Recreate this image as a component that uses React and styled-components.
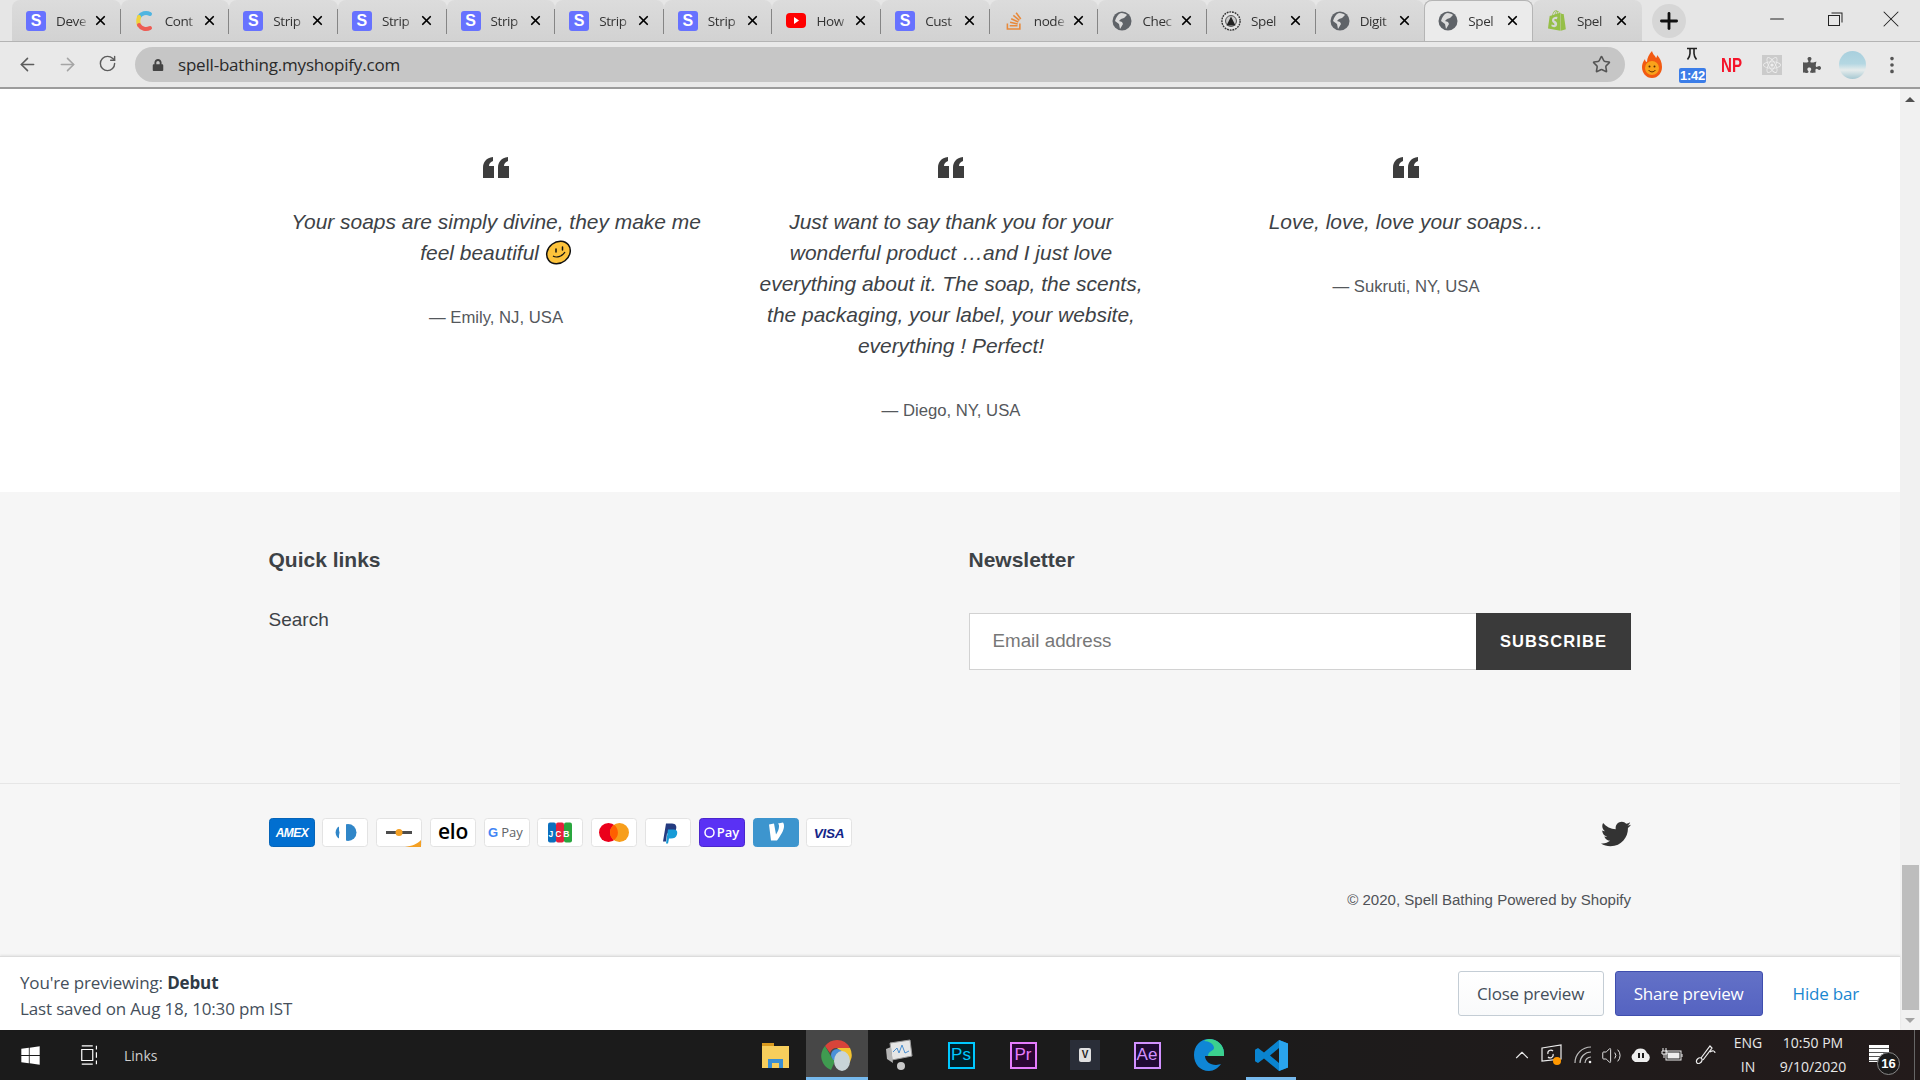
import React from "react";
import styled, { createGlobalStyle } from "styled-components";
import { ArrowLeft, ArrowRight, RotateCw, Star, X, Plus, Minus, ChevronUp, Volume2, EllipsisVertical } from "lucide-react";
import { FaLock, FaPuzzlePiece, FaReact, FaShopify, FaStackOverflow, FaTwitter, FaWindows } from "react-icons/fa";

const GlobalStyle = createGlobalStyle`
  html, body {
    margin: 0;
    padding: 0;
    width: 1920px;
    height: 1080px;
    overflow: hidden;
    background: #fff;
    font-family: "Liberation Sans", Arial, sans-serif;
  }
  * { box-sizing: border-box; }
`;

const Screen = styled.div`
  width: 1920px;
  height: 1080px;
  display: flex;
  flex-direction: column;
  overflow: hidden;
`;

/* ---- chrome ---- */

const TabStrip = styled.div`
  height: 41px;
  flex: none;
  display: flex;
  align-items: flex-end;
  padding-left: 12px;
  background: #e6e6e6;
`;

const Tab = styled.div`
  width: 108.65px;
  height: 41px;
  flex: none;
  display: flex;
  align-items: center;
  padding-left: 14px;
  background: ${p => (p.$active ? "#ebebeb" : "linear-gradient(#dcdcdc, #d2d2d2)")};
  border-radius: 8px 8px 0 0;
  box-shadow: ${p => (p.$active ? "inset 0 1px 0 #b5b5b5, inset 1px 0 0 #b5b5b5, inset -1px 0 0 #b5b5b5" : "none")};
  position: relative;
  ${p =>
    p.$sep &&
    `&::after {
      content: "";
      position: absolute;
      right: 0;
      top: 9px;
      width: 1px;
      height: 25px;
      background: #858585;
    }`}
`;

const TabIconSlot = styled.span`
  width: 20px;
  height: 20px;
  flex: none;
  display: flex;
  align-items: center;
  justify-content: center;
`;

const StripeIcon = styled.span`
  width: 20px;
  height: 20px;
  border-radius: 3px;
  background: #6772ff;
  color: #fff;
  font: 700 16px "Liberation Sans", sans-serif;
  display: flex;
  align-items: center;
  justify-content: center;
`;

const TabTitle = styled.span`
  width: 33px;
  margin-left: 10px;
  overflow: hidden;
  white-space: nowrap;
  font: 400 13.5px "Open Sans", sans-serif;
  color: #333;
  letter-spacing: -0.4px;
  -webkit-mask-image: linear-gradient(to right, #000 70%, transparent 100%);
  mask-image: linear-gradient(to right, #000 70%, transparent 100%);
`;

const TabClose = styled.span`
  margin-left: 4px;
  display: flex;
  color: #000;
`;

const NewTab = styled.button`
  width: 34px;
  height: 34px;
  margin: 0 0 3px 10px;
  padding: 0;
  border: 0;
  border-radius: 50%;
  background: #d6d6d6;
  color: #111;
  display: flex;
  align-items: center;
  justify-content: center;
`;

const WindowControls = styled.div`
  margin-left: auto;
  padding-right: 1px;
  height: 41px;
  display: flex;
  align-items: flex-start;
`;

const WindowButton = styled.span`
  width: 57px;
  height: 37px;
  display: flex;
  align-items: center;
  justify-content: center;
  color: #222;
`;

const RestoreIcon = styled.span`
  width: 12px;
  height: 11px;
  margin-top: 3px;
  border: 1.5px solid #222;
  box-shadow: 2px -2px 0 -0.5px #e6e6e6, 3px -3px 0 -0.5px #222;
`;

const Toolbar = styled.div`
  height: 48px;
  flex: none;
  display: flex;
  align-items: center;
  background: #e9e9e9;
  border-top: 1px solid #b4b4b4;
  border-bottom: 2px solid #9c9c9c;
`;

const NavButton = styled.span`
  width: 40px;
  display: flex;
  justify-content: center;
  color: ${p => (p.$dim ? "#a5a5a5" : "#5c5c5c")};
`;

const NavGroup = styled.div`
  width: 135px;
  padding-left: 7px;
  display: flex;
`;

const AddressBar = styled.div`
  width: 1490px;
  height: 35px;
  border-radius: 18px;
  background: #c6c6c6;
  display: flex;
  align-items: center;
  padding: 0 14px 0 17px;
  color: #444;
`;

const Url = styled.span`
  margin-left: 14px;
  font: 400 17px "Open Sans", sans-serif;
  letter-spacing: -0.2px;
  color: #2a2a2a;
`;

const AddressStar = styled.span`
  margin-left: auto;
  display: flex;
  color: #555;
`;

const Extensions = styled.div`
  flex: 1;
  padding-left: 7px;
  display: flex;
  align-items: center;
`;

const Extension = styled.span`
  width: 40px;
  height: 40px;
  flex: none;
  display: flex;
  align-items: center;
  justify-content: center;
  position: relative;
`;

const NpMark = styled.span`
  font: 700 21px "Liberation Sans", sans-serif;
  color: #f5142a;
  transform: scaleX(0.72);
`;

const FlaskHolder = styled.span`
  display: flex;
  margin-top: -22px;
`;

const TimerBadge = styled.span`
  position: absolute;
  left: 7px;
  bottom: 2px;
  width: 27px;
  height: 15px;
  border-radius: 2px;
  background: #3b7de8;
  color: #fff;
  font: 700 13px "Liberation Sans", sans-serif;
  line-height: 15px;
  text-align: center;
  letter-spacing: -0.2px;
`;

const ReactBox = styled.span`
  width: 20px;
  height: 20px;
  background: #cbcbcb;
  display: flex;
  align-items: center;
  justify-content: center;
`;

const Avatar = styled.span`
  width: 27px;
  height: 28px;
  border-radius: 50%;
  background: linear-gradient(#a8cfdd, #b4d7e2 45%, #e6ecec 68%, #a6c8d2);
`;

/* ---- page ---- */

const Body = styled.div`
  flex: 1;
  min-height: 0;
  display: flex;
`;

const Page = styled.div`
  width: 1900px;
  display: flex;
  flex-direction: column;
`;

const Testimonials = styled.section`
  flex: none;
  height: 403px;
  padding: 68px 0 0 268.5px;
  display: grid;
  grid-template-columns: repeat(3, 455px);
  background: #fff;
`;

const Testimonial = styled.figure`
  margin: 0;
  display: flex;
  flex-direction: column;
  align-items: center;
  text-align: center;
  color: #3d4246;
`;

const QuoteMark = styled.svg`
  width: 26px;
  height: 21px;
  margin-bottom: 28px;
  color: #3d3d3d;
`;

const QuoteText = styled.blockquote`
  margin: 0;
  width: ${p => p.$width}px;
  font: italic 400 20.95px/31px "Liberation Sans", sans-serif;
  color: #3d4246;
`;

const Smile = styled.svg`
  width: 27px;
  height: 25px;
  vertical-align: -5px;
`;

const Attribution = styled.figcaption`
  margin-top: 37px;
  font: 400 16.7px/25px "Liberation Sans", sans-serif;
  color: #55585c;
`;

const Footer = styled.footer`
  flex: 1;
  background: #f6f6f6;
  display: flex;
  flex-direction: column;
`;

const FooterTop = styled.div`
  height: 292px;
  flex: none;
  padding: 53px 269px 0 268.5px;
  display: grid;
  grid-template-columns: 700px 1fr;
  border-bottom: 1px solid #e6e6e6;
`;

const FooterHeading = styled.h4`
  margin: 0;
  font: 700 21px/30px "Liberation Sans", sans-serif;
  color: #3d4246;
`;

const FooterLink = styled.a`
  display: block;
  margin-top: 31px;
  font: 400 19px/27px "Liberation Sans", sans-serif;
  color: #3d4246;
`;

const NewsletterForm = styled.form`
  display: flex;
  margin-top: 38px;
  height: 57px;
`;

const EmailInput = styled.div`
  flex: 1;
  background: #fff;
  border: 1px solid #d2d2d2;
  border-right: 0;
  padding: 0 0 2px 23px;
  display: flex;
  align-items: center;
  font: 400 18.8px "Liberation Sans", sans-serif;
  color: #777;
`;

const SubscribeButton = styled.button`
  width: 155px;
  border: 0;
  background: #3a3a3a;
  color: #fff;
  font: 700 16.5px "Liberation Sans", sans-serif;
  letter-spacing: 1.1px;
`;

const FooterBottom = styled.div`
  padding: 34px 269px 0 268.5px;
`;

const PaymentRow = styled.div`
  display: flex;
  align-items: flex-start;
`;

const PaymentList = styled.div`
  display: flex;
  gap: 7.8px;
`;

const PayCard = styled.svg`
  width: 46px;
  height: 29px;
  display: block;
`;

const TwitterLink = styled.a`
  margin-left: auto;
  display: flex;
  color: #333;
  padding-top: 1px;
`;

const Copyright = styled.div`
  margin-top: 41px;
  text-align: right;
  font: 400 15.05px/20px "Liberation Sans", sans-serif;
  color: #4f5256;
`;

const PreviewBar = styled.div`
  flex: none;
  height: 74px;
  background: #fff;
  border-top: 1px solid #dcdcdc;
  box-shadow: 0 -1px 2px rgba(0, 0, 0, 0.08);
  padding: 0 41px 0 20px;
  display: flex;
  align-items: center;
  position: relative;
`;

const PreviewInfo = styled.div`
  margin-top: 5px;
  font: 400 17px/26px "Open Sans", sans-serif;
  color: #454f5b;
  letter-spacing: -0.15px;
  b { font-weight: 700; color: #2f3a46; }
`;

const PreviewActions = styled.div`
  margin-left: auto;
  display: flex;
  align-items: center;
`;

const BarButton = styled.button`
  height: 45px;
  width: ${p => p.$width}px;
  margin-right: 11px;
  padding: 0;
  border-radius: 3px;
  font: 400 17px "Open Sans", sans-serif;
  letter-spacing: -0.2px;
  color: ${p => (p.$primary ? "#fff" : "#454f5b")};
  border: 1px solid ${p => (p.$primary ? "#3f4eae" : "#c4cdd5")};
  background: ${p => (p.$primary ? "linear-gradient(#6371c7, #5563c1)" : "linear-gradient(#fff, #f9fafb)")};
`;

const HideBar = styled.a`
  margin-left: 19px;
  font: 400 17px "Open Sans", sans-serif;
  letter-spacing: -0.2px;
  color: #1a86d0;
`;

const Scrollbar = styled.div`
  width: 20px;
  flex: none;
  background: #f1f1f1;
  display: flex;
  flex-direction: column;
  align-items: center;
`;

const ScrollArrow = styled.span`
  height: 20px;
  flex: none;
  display: flex;
  align-items: center;
  &::before {
    content: "";
    border-left: 5px solid transparent;
    border-right: 5px solid transparent;
    ${p => (p.$down ? "border-top: 5px solid #a3a3a3;" : "border-bottom: 5px solid #505050;")}
  }
`;

const ScrollThumb = styled.div`
  width: 17px;
  height: 145px;
  margin-top: auto;
  background: #bdbdbd;
`;

/* ---- taskbar ---- */

const Taskbar = styled.div`
  height: 50px;
  flex: none;
  background: linear-gradient(to right, #1b1b1b 60%, #231b1b);
  display: flex;
  align-items: center;
  color: #fff;
`;

const StartButton = styled.span`
  width: 60px;
  padding-left: 20px;
  display: flex;
`;

const TaskView = styled.svg`
  width: 20px;
  height: 22px;
  margin-left: 20px;
`;

const LinksLabel = styled.span`
  width: 620px;
  margin-left: 24px;
  font: 400 14px "Open Sans", sans-serif;
  color: #cfcfcf;
`;

const AppSlot = styled.span`
  width: 62px;
  height: 50px;
  flex: none;
  display: flex;
  align-items: center;
  justify-content: center;
  background: ${p => (p.$active ? "#474747" : "transparent")};
  border-bottom: 3px solid ${p => (p.$active ? "#76b9ed" : "transparent")};
  padding-top: 3px;
  position: relative;
  ${p =>
    p.$open &&
    `&::after {
      content: "";
      position: absolute;
      left: 6px;
      right: 6px;
      bottom: -3px;
      height: 3px;
      background: #76b9ed;
    }`}
`;

const AdobeIcon = styled.span`
  width: 27px;
  height: 27px;
  border: 2px solid ${p => p.$color};
  background: ${p => p.$bg};
  color: ${p => p.$color};
  font: 400 17px "Liberation Sans", sans-serif;
  display: flex;
  align-items: center;
  justify-content: center;
`;

const VmIcon = styled.span`
  width: 30px;
  height: 30px;
  background: #2a2e38;
  display: flex;
  align-items: center;
  justify-content: center;
  position: relative;
`;

const VmGlyph = styled.span`
  width: 12px;
  height: 14px;
  border-radius: 2px;
  background: #e0e0e0;
  color: #222;
  font: 700 10px/14px "Liberation Sans", sans-serif;
  text-align: center;
`;

const Tray = styled.div`
  margin-left: auto;
  height: 50px;
  display: flex;
  align-items: center;
`;

const TrayItem = styled.span`
  width: ${p => p.$width}px;
  height: 50px;
  flex: none;
  display: flex;
  flex-direction: column;
  align-items: center;
  justify-content: center;
  position: relative;
  font: 400 14px/24px "Open Sans", sans-serif;
  color: #e8e8e8;
`;

const NotifyBadge = styled.span`
  position: absolute;
  right: 5px;
  bottom: 5px;
  width: 23px;
  height: 23px;
  border-radius: 50%;
  border: 1px solid #888;
  background: #1b1a1a;
  color: #fff;
  font: 700 13px/21px "Liberation Sans", sans-serif;
  text-align: center;
`;

const NotifyPaper = styled.span`
  position: absolute;
  left: 14px;
  top: 15px;
  width: 20px;
  height: 17px;
  background: repeating-linear-gradient(#fff 0 3px, #555 3px 4px);
`;

const ShowDesktop = styled.span`
  width: 6px;
  height: 50px;
  border-left: 1px solid #666;
  margin-left: 9px;
`;

/* ---- little drawings ---- */

const Globe = ({ size = 20 }) => (
  <svg width={size} height={size} viewBox="0 0 20 20">
    <circle cx="10" cy="10" r="9.5" fill="#5f6368" />
    <path d="M9 2c3 0 5 1 6 2l-3 3-3 1-2 2 3 1 1 2-3 5-1-5-4-3c1-4 3-7 6-8z" fill="#dcdcdc" />
  </svg>
);

const ContentfulIcon = () => (
  <svg width="20" height="22" viewBox="0 0 20 22" fill="none" strokeWidth="4" strokeLinecap="round">
    <path d="M4 7a8 8 0 0 1 11-3" stroke="#4fb5e1" />
    <path d="M4 7c-1 3-1 6 0 8" stroke="#f0d23c" />
    <path d="M4 15a8 8 0 0 0 11 3" stroke="#ed5c54" />
  </svg>
);

const YoutubeIcon = () => (
  <svg width="20" height="15" viewBox="0 0 20 15">
    <rect width="20" height="15" rx="4" fill="#f00" />
    <path d="M8 4l5 3.5L8 11z" fill="#fff" />
  </svg>
);

const SealIcon = () => (
  <svg width="22" height="22" viewBox="0 0 22 22">
    <circle cx="11" cy="11" r="10" fill="#e4e4e4" stroke="#333" strokeWidth="1.5" strokeDasharray="2 1" />
    <circle cx="11" cy="11" r="6" fill="#ccc" stroke="#444" />
    <path d="M11 6l5 10H6z" fill="#222" />
  </svg>
);

const FlameIcon = () => (
  <svg width="20" height="27" viewBox="0 0 20 27">
    <path d="M10 0c1 4 3 4 4 7 1-1 1-2 1-3 3 3 5 7 5 12 0 6-4 11-10 11S0 22 0 16c0-3 1-5 3-8 0 2 1 3 2 3 0-4 2-8 5-11z" fill="#f25a12" />
    <circle cx="10" cy="17" r="7" fill="#f9a21b" />
    <circle cx="7.5" cy="15.5" r="1" fill="#5a2a00" />
    <circle cx="12.5" cy="15.5" r="1" fill="#5a2a00" />
    <path d="M6.5 19c2 2.500 5 2.500 7 0" stroke="#5a2a00" fill="none" />
  </svg>
);

const FlaskIcon = () => (
  <svg width="12" height="13" viewBox="0 0 12 13" fill="none" stroke="#222" strokeWidth="1.6">
    <path d="M1 1.500h10M4 1.500v5c0 2-1 4-2.500 6M8 1.500v5c0 2 1 4 2.500 6" />
  </svg>
);

const ChromeIcon = () => (
  <svg width="32" height="32" viewBox="0 0 32 32">
    <path d="M16 1a15 15 0 0 1 13 8H16a7 7 0 0 0-7 5L4 7a15 15 0 0 1 12-6z" fill="#d8443a" />
    <path d="M4 7l7 12 3 3-4 9A15 15 0 0 1 4 7z" fill="#3f9b50" />
    <path d="M29 9a15 15 0 0 1-3 18l-7-11a7 7 0 0 0-3-7z" fill="#f3c431" />
    <circle cx="16" cy="16" r="6" fill="#4a90d9" />
    <ellipse cx="21" cy="22" rx="8" ry="10" fill="#c8d4d8" />
  </svg>
);

const ExplorerIcon = () => (
  <svg width="28" height="25" viewBox="0 0 28 25">
    <path d="M1 0h12v5H1z" fill="#d99a1e" />
    <path d="M1 3h27v22H1z" fill="#f7ce5c" />
    <path d="M7 25V16h15v9h-4v-5h-7v5z" fill="#3a8fd4" />
  </svg>
);

const PrinterIcon = () => (
  <svg width="30" height="32" viewBox="0 0 30 32">
    <path d="M6 4l20-3 2 16-20 4z" fill="#e6e6e6" stroke="#999" />
    <path d="M9 13l4-4 2 5 3-8 3 8 4-2" stroke="#4a8fd0" fill="none" />
    <path d="M2 10l5-2 2 16-6-4z" fill="#b5b5b5" />
    <circle cx="17" cy="27" r="4" fill="#c8c8c8" />
  </svg>
);

const EdgeIcon = () => (
  <svg width="30" height="32" viewBox="0 0 30 32">
    <path d="M15 0c8 0 15 6 15 14v3H11c0 5 5 9 11 9 2 0 4-1 5-1-3 4-7 7-12 7C6 32 0 25 0 16S6 0 15 0z" fill="#0f86d6" />
    <path d="M15 0c8 0 15 6 15 14v3H14c0-5 6-5 6-8 0-4-5-7-10-7 1-1 3-2 5-2z" fill="#3bd18f" />
  </svg>
);

const VsCodeIcon = () => (
  <svg width="33" height="31" viewBox="0 0 33 35" preserveAspectRatio="none">
    <path d="M24 0l9 4v27l-9 4L9 21l-6 5-3-2V11l3-2 6 5zM24 9l-9 8.500 9 8.500z" fill="#0a84d0" />
    <path d="M24 0l9 4v27l-9 4z" fill="#2aa4ee" />
  </svg>
);

const ScreenTrayIcon = () => (
  <svg width="22" height="22" viewBox="0 0 22 22" fill="none" stroke="#eee" strokeWidth="1.2">
    <path d="M1 4l19-3v14l-19 2z" />
    <path d="M7 10a3 3 0 0 1 5-3M12 10a3 3 0 0 1-5 3" />
    <circle cx="16" cy="17" r="4" fill="#ff9800" stroke="none" />
  </svg>
);

const WifiTrayIcon = () => (
  <svg width="20" height="20" viewBox="0 0 20 20" fill="none" stroke="#bdbdbd" strokeWidth="1.2">
    <path d="M12 18A6 6 0 0 1 18 12M7 18A11 11 0 0 1 18 7M2 18A16 16 0 0 1 18 2" />
    <circle cx="17" cy="17" r="1.300" fill="#eee" stroke="none" />
  </svg>
);

const CloudTrayIcon = () => (
  <svg width="22" height="14" viewBox="0 0 22 14">
    <path d="M5 14a5 5 0 0 1-1-9 7 7 0 0 1 13 0 5 5 0 0 1 0 9z" fill="#eee" />
    <path d="M9 5v5M13 5v5" stroke="#1b1a1a" strokeWidth="2" />
  </svg>
);

const BatteryTrayIcon = () => (
  <svg width="22" height="16" viewBox="0 0 22 16" fill="none" stroke="#eee">
    <rect x="5" y="4" width="15" height="9" fill="#1b1a1a" />
    <rect x="7" y="6" width="11" height="5" fill="#eee" />
    <path d="M21 7v3M2 1v3M5 1v3M1 4h5v3H1zM3 7v4" />
  </svg>
);

const PenTrayIcon = () => (
  <svg width="22" height="22" viewBox="0 0 22 22" fill="none" stroke="#eee" strokeWidth="1.2">
    <path d="M2 19c-2-3 2-6 4-5s1 4-1 5-2 1-3 0zM6 14L15 2l2 2-9 12M15 8c3-2 5-1 5 1" />
  </svg>
);

const QuoteIcon = () => (
  <QuoteMark viewBox="0 0 26 21">
    <path d="M0 21V11C0 5 3 1 10 0v4C7 5 6 7 6 9h5v12zM15 21V11c0-6 3-10 10-11v4c-3 1-4 3-4 5h5v12z" fill="currentColor" />
  </QuoteMark>
);

const SmileIcon = () => (
  <Smile viewBox="0 0 27 25">
    <ellipse cx="13.500" cy="12.500" rx="12.500" ry="10.500" transform="rotate(-38 13.500 12.500)" fill="#fdc33b" stroke="#111" strokeWidth="1.500" />
    <path d="M11 9v3M17.500 7v3" stroke="#111" strokeWidth="1.500" strokeLinecap="round" />
    <path d="M8 16c3 2 9 1 12-4" stroke="#111" fill="none" strokeWidth="1.200" />
  </Smile>
);

const CardFrame = ({ fill = "#fff", stroke = "#e3e3e3", children }) => (
  <PayCard viewBox="0 0 46 29">
    <rect x="0.500" y="0.500" width="45" height="28" rx="3" fill={fill} stroke={stroke} />
    <g transform="translate(0 -2.500)">{children}</g>
  </PayCard>
);

const cardFont = { fontFamily: "Liberation Sans, sans-serif" };

const PaymentCards = () => (
  <PaymentList>
    <CardFrame fill="#016fd0" stroke="#0564b8">
      <text x="23" y="21.500" textAnchor="middle" fontSize="12" fontWeight="700" fontStyle="italic" fill="#fff" letterSpacing="-0.500" style={cardFont}>AMEX</text>
    </CardFrame>
    <CardFrame>
      <circle cx="26" cy="17" r="8.500" fill="#3086c8" />
      <rect x="18" y="8" width="6" height="18" fill="#fff" />
      <path d="M17 11a7 7 0 0 0 0 12z" fill="#3086c8" />
    </CardFrame>
    <CardFrame>
      <rect x="10" y="15.500" width="26" height="3" fill="#4d4d4d" />
      <circle cx="23" cy="17" r="3.500" fill="#f4a024" />
      <path d="M29 31.500c7-1 12-3 16-7v7z" fill="#f4a024" />
    </CardFrame>
    <CardFrame>
      <text x="23" y="23" textAnchor="middle" fontSize="21" fontWeight="600" fill="#000" letterSpacing="-0.300" style={{ fontFamily: "Open Sans, sans-serif" }}>elo</text>
    </CardFrame>
    <CardFrame>
      <text x="9" y="21" textAnchor="middle" fontSize="13" fontWeight="700" fill="#4285f4" style={cardFont}>G</text>
      <text x="28" y="21.500" textAnchor="middle" fontSize="13" fill="#5f6368" style={{ fontFamily: "Open Sans, sans-serif" }}>Pay</text>
    </CardFrame>
    <CardFrame>
      <rect x="11" y="7" width="8" height="20" rx="2" fill="#0b6fbe" />
      <rect x="19" y="7" width="8" height="20" rx="2" fill="#e41f3b" />
      <rect x="27" y="7" width="8" height="20" rx="2" fill="#2aa63f" />
      <text x="23" y="21" textAnchor="middle" fontSize="8.500" fontWeight="700" fill="#fff" letterSpacing="2" style={cardFont}>JCB</text>
    </CardFrame>
    <CardFrame>
      <circle cx="17.500" cy="17" r="9.500" fill="#eb001b" />
      <circle cx="28.500" cy="17" r="9.500" fill="#f79e1b" />
      <path d="M23 9.300a9.500 9.500 0 0 1 0 15.400 9.500 9.500 0 0 1 0-15.400z" fill="#ff5f00" />
    </CardFrame>
    <CardFrame>
      <path d="M18 26l3-18h6c4 0 5 3 4 6-1 3-4 4-7 4h-2l-1 8z" fill="#253b80" />
      <path d="M21 28l2-14h5c3 0 5 1 4 5-1 3-3 4-6 4h-2l-1 5z" fill="#179bd7" />
    </CardFrame>
    <CardFrame fill="#5a31f4" stroke="#4a26cc">
      <circle cx="10.500" cy="17" r="4.500" fill="none" stroke="#fff" strokeWidth="1.500" />
      <text x="29" y="21.500" textAnchor="middle" fontSize="13" fontWeight="600" fill="#fff" style={{ fontFamily: "Open Sans, sans-serif" }}>Pay</text>
    </CardFrame>
    <CardFrame fill="#3d95ce" stroke="#3d95ce">
      <path d="M16 9l5-1 2 11c2-3 3-6 3-8 0-1 0-2-1-3l5-1c1 1 1 3 1 4 0 4-4 10-7 14h-6z" fill="#fff" />
    </CardFrame>
    <CardFrame>
      <text x="23" y="22" textAnchor="middle" fontSize="13.500" fontWeight="700" fontStyle="italic" fill="#142688" letterSpacing="-0.300" style={cardFont}>VISA</text>
    </CardFrame>
  </PaymentList>
);

const tabs = [
  { title: "Deve", icon: <StripeIcon>S</StripeIcon>, sep: true },
  { title: "Cont", icon: <ContentfulIcon />, sep: true },
  { title: "Strip", icon: <StripeIcon>S</StripeIcon>, sep: true },
  { title: "Strip", icon: <StripeIcon>S</StripeIcon>, sep: true },
  { title: "Strip", icon: <StripeIcon>S</StripeIcon>, sep: true },
  { title: "Strip", icon: <StripeIcon>S</StripeIcon>, sep: true },
  { title: "Strip", icon: <StripeIcon>S</StripeIcon>, sep: true },
  { title: "How", icon: <YoutubeIcon />, sep: true },
  { title: "Cust", icon: <StripeIcon>S</StripeIcon>, sep: true },
  { title: "node", icon: <FaStackOverflow size={20} color="#e8893a" />, sep: true },
  { title: "Chec", icon: <Globe />, sep: true },
  { title: "Spel", icon: <SealIcon />, sep: true },
  { title: "Digit", icon: <Globe /> },
  { title: "Spel", icon: <Globe />, active: true },
  { title: "Spel", icon: <FaShopify size={21} color="#95bf47" /> },
];

const quotes = [
  {
    width: 420,
    text: <>Your soaps are simply divine, they make me feel beautiful <SmileIcon /></>,
    by: "— Emily, NJ, USA",
  },
  {
    width: 400,
    text: "Just want to say thank you for your wonderful product …and I just love everything about it. The soap, the scents, the packaging, your label, your website, everything ! Perfect!",
    by: "— Diego, NY, USA",
  },
  { width: 400, text: "Love, love, love your soaps…", by: "— Sukruti, NY, USA" },
];

export default function App() {
  return (
    <Screen>
      <GlobalStyle />
      <TabStrip>
        {tabs.map((t, i) => (
          <Tab key={i} $active={t.active} $sep={t.sep}>
            <TabIconSlot>{t.icon}</TabIconSlot>
            <TabTitle>{t.title}</TabTitle>
            <TabClose><X size={15} strokeWidth={2.8} /></TabClose>
          </Tab>
        ))}
        <NewTab><Plus size={26} strokeWidth={2.6} /></NewTab>
        <WindowControls>
          <WindowButton><Minus size={22} strokeWidth={1.1} /></WindowButton>
          <WindowButton><RestoreIcon /></WindowButton>
          <WindowButton><X size={28} strokeWidth={0.9} /></WindowButton>
        </WindowControls>
      </TabStrip>
      <Toolbar>
        <NavGroup>
          <NavButton><ArrowLeft size={21} strokeWidth={1.8} /></NavButton>
          <NavButton $dim><ArrowRight size={21} strokeWidth={1.8} /></NavButton>
          <NavButton><RotateCw size={19} strokeWidth={1.8} /></NavButton>
        </NavGroup>
        <AddressBar>
          <FaLock size={12} />
          <Url>spell-bathing.myshopify.com</Url>
          <AddressStar><Star size={19} /></AddressStar>
        </AddressBar>
        <Extensions>
          <Extension><FlameIcon /></Extension>
          <Extension>
            <FlaskHolder><FlaskIcon /></FlaskHolder>
            <TimerBadge>1:42</TimerBadge>
          </Extension>
          <Extension><NpMark>NP</NpMark></Extension>
          <Extension><ReactBox><FaReact size={18} color="#eeeeee" /></ReactBox></Extension>
          <Extension><FaPuzzlePiece size={18} color="#555" /></Extension>
          <Extension><Avatar /></Extension>
          <Extension><EllipsisVertical size={22} color="#555" /></Extension>
        </Extensions>
      </Toolbar>
      <Body>
        <Page>
          <Testimonials>
            {quotes.map(q => (
              <Testimonial key={q.by}>
                <QuoteIcon />
                <QuoteText $width={q.width}>{q.text}</QuoteText>
                <Attribution>{q.by}</Attribution>
              </Testimonial>
            ))}
          </Testimonials>
          <Footer>
            <FooterTop>
              <div>
                <FooterHeading>Quick links</FooterHeading>
                <FooterLink>Search</FooterLink>
              </div>
              <div>
                <FooterHeading>Newsletter</FooterHeading>
                <NewsletterForm>
                  <EmailInput>Email address</EmailInput>
                  <SubscribeButton type="button">SUBSCRIBE</SubscribeButton>
                </NewsletterForm>
              </div>
            </FooterTop>
            <FooterBottom>
              <PaymentRow>
                <PaymentCards />
                <TwitterLink><FaTwitter size={30} /></TwitterLink>
              </PaymentRow>
              <Copyright>© 2020, Spell Bathing Powered by Shopify</Copyright>
            </FooterBottom>
          </Footer>
          <PreviewBar>
            <PreviewInfo>
              You're previewing: <b>Debut</b>
              <br />
              Last saved on Aug 18, 10:30 pm IST
            </PreviewInfo>
            <PreviewActions>
              <BarButton $width={146}>Close preview</BarButton>
              <BarButton $width={148} $primary>Share preview</BarButton>
              <HideBar>Hide bar</HideBar>
            </PreviewActions>
          </PreviewBar>
        </Page>
        <Scrollbar>
          <ScrollArrow />
          <ScrollThumb />
          <ScrollArrow $down />
        </Scrollbar>
      </Body>
      <Taskbar>
        <StartButton><FaWindows size={21} /></StartButton>
        <TaskView viewBox="0 0 20 24" fill="none" stroke="#fff" strokeWidth="1.300">
          <path d="M1 2h12M1 6h12v12H1zM1 22h12M17 2v4M17 9v6M17 18v4" />
        </TaskView>
        <LinksLabel>Links</LinksLabel>
        <AppSlot><ExplorerIcon /></AppSlot>
        <AppSlot $active><ChromeIcon /></AppSlot>
        <AppSlot><PrinterIcon /></AppSlot>
        <AppSlot><AdobeIcon $color="#00c8ff" $bg="#001d26">Ps</AdobeIcon></AppSlot>
        <AppSlot><AdobeIcon $color="#e77cff" $bg="#2a0634">Pr</AdobeIcon></AppSlot>
        <AppSlot><VmIcon><VmGlyph>V</VmGlyph></VmIcon></AppSlot>
        <AppSlot><AdobeIcon $color="#d291ff" $bg="#1f0a33">Ae</AdobeIcon></AppSlot>
        <AppSlot><EdgeIcon /></AppSlot>
        <AppSlot $open><VsCodeIcon /></AppSlot>
        <Tray>
          <TrayItem $width={30}><ChevronUp size={22} strokeWidth={1.2} /></TrayItem>
          <TrayItem $width={30}><ScreenTrayIcon /></TrayItem>
          <TrayItem $width={31}><WifiTrayIcon /></TrayItem>
          <TrayItem $width={27}><Volume2 size={21} strokeWidth={1.1} /></TrayItem>
          <TrayItem $width={32}><CloudTrayIcon /></TrayItem>
          <TrayItem $width={30}><BatteryTrayIcon /></TrayItem>
          <TrayItem $width={38}><PenTrayIcon /></TrayItem>
          <TrayItem $width={46}><span>ENG</span><span>IN</span></TrayItem>
          <TrayItem $width={84}><span>10:50 PM</span><span>9/10/2020</span></TrayItem>
          <TrayItem $width={50}><NotifyPaper /><NotifyBadge>16</NotifyBadge></TrayItem>
          <ShowDesktop />
        </Tray>
      </Taskbar>
    </Screen>
  );
}
